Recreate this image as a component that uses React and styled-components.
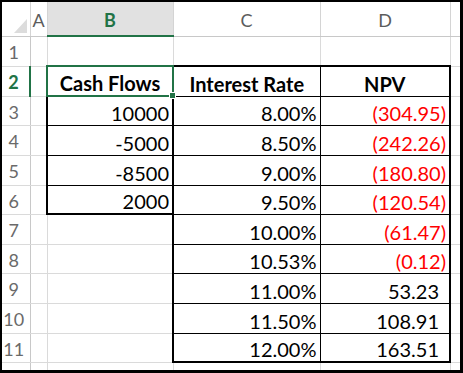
import React from "react";
import styled, { createGlobalStyle } from "styled-components";

const GREEN = "#217346";
const GRID = "1px solid #dadada";
const HEAD_LINE = "1px solid #c8c8c8";
const THIN = "1px solid #000";
const THICK = "2px solid #000";
const SEL = `2px solid ${GREEN}`;

const COLS = ["A", "B", "C", "D", "E"];
const WIDTHS = { rh: 28, A: 17, B: 126, C: 147, D: 130, E: 10 };
const HEIGHTS = [30, 30, 29, 30, 30, 29, 30, 29, 30, 30, 29];

const data = {
  2: { B: "Cash Flows", C: "Interest Rate", D: "NPV" },
  3: { B: "10000", C: "8.00%", D: "(304.95)" },
  4: { B: "-5000", C: "8.50%", D: "(242.26)" },
  5: { B: "-8500", C: "9.00%", D: "(180.80)" },
  6: { B: "2000", C: "9.50%", D: "(120.54)" },
  7: { C: "10.00%", D: "(61.47)" },
  8: { C: "10.53%", D: "(0.12)" },
  9: { C: "11.00%", D: "53.23" },
  10: { C: "11.50%", D: "108.91" },
  11: { C: "12.00%", D: "163.51" },
};

// which bordered block a cell belongs to
const region = (r, c) => {
  if (c === "B" && r >= 2 && r <= 6) return 1;
  if ((c === "C" || c === "D") && r >= 2 && r <= 11) return 2;
  return 0;
};

const edge = (a, b) => {
  if (a !== b && (a || b)) return THICK;
  if (a && a === b) return THIN;
  return GRID;
};

// border above row r
const hEdge = (r, c) => {
  if (c === "B" && (r === 2 || r === 3)) return SEL;
  if (r === 1) return c === "B" ? SEL : HEAD_LINE;
  return edge(region(r - 1, c), region(r, c));
};

// border left of column c
const vEdge = (r, c) => {
  if (r === 2 && (c === "B" || c === "C")) return SEL;
  if (c === "A") return r === 2 ? SEL : HEAD_LINE;
  const prev = COLS[COLS.indexOf(c) - 1];
  return edge(region(r, prev), region(r, c));
};

const GlobalStyle = createGlobalStyle`
  body {
    margin: 0;
    background: #fff;
  }
`;

const Frame = styled.div`
  width: 463px;
  height: 373px;
  box-sizing: border-box;
  border: 2px solid #000;
  border-right-width: 3px;
  border-bottom-width: 3px;
  overflow: hidden;
  background: #fff;
  font-family: Lato, "Liberation Sans", sans-serif;
`;

const Sheet = styled.table`
  border-collapse: collapse;
  table-layout: fixed;
  width: 458px;
`;

const Row = styled.tr`
  height: ${(p) => p.$h}px;
`;

const HeadCell = styled.th`
  box-sizing: border-box;
  height: 34px;
  padding: 2px 0 0;
  line-height: 20px;
  font-size: 18px;
  font-weight: ${(p) => (p.$active ? 700 : 400)};
  color: ${(p) => (p.$active ? GREEN : "#5c5c5c")};
  background: ${(p) => (p.$active ? "#e1e1e1" : "#fff")};
  border-left: 1px solid #d4d4d4;
  border-right: 1px solid #d4d4d4;
  border-top: none;
  border-bottom: ${(p) => p.$b};
  text-align: center;
  vertical-align: middle;
`;

const Corner = styled.th`
  box-sizing: border-box;
  height: 34px;
  padding: 0;
  border-right: 1px solid #d4d4d4;
  border-bottom: ${HEAD_LINE};
  svg {
    display: block;
    margin: 14px 0 0 12px;
  }
`;

const RowHead = styled.th`
  box-sizing: border-box;
  height: ${(p) => p.$h}px;
  padding: 2px 4px 0 0;
  line-height: 20px;
  font-size: 18px;
  font-weight: ${(p) => (p.$active ? 700 : 400)};
  color: ${(p) => (p.$active ? GREEN : "#6a6a6a")};
  background: #fff;
  border-right: ${(p) => p.$r};
  border-bottom: 1px solid #dadada;
  text-align: center;
  vertical-align: middle;
  overflow: hidden;
`;

const Cell = styled.td`
  position: relative;
  box-sizing: border-box;
  height: ${(p) => p.$h}px;
  padding: 0 ${(p) => (p.$pos ? 10 : 3)}px 1px 3px;
  line-height: 22px;
  font-size: 20px;
  font-weight: ${(p) => (p.$bold ? 700 : 400)};
  color: ${(p) => (p.$red ? "#ff0000" : "#000")};
  text-align: ${(p) => (p.$bold ? "center" : "right")};
  vertical-align: bottom;
  white-space: nowrap;
  overflow: visible;
  border-top: ${(p) => p.$t};
  border-right: ${(p) => p.$r};
  border-bottom: ${(p) => p.$b};
  border-left: ${(p) => p.$l};
`;

const FillHandle = styled.span`
  position: absolute;
  right: -4px;
  bottom: -4px;
  width: 5px;
  height: 5px;
  background: ${GREEN};
  border: 1px solid #fff;
  z-index: 2;
`;

export default function App() {
  const rows = HEIGHTS.map((h, i) => i + 1);
  return (
    <Frame>
      <GlobalStyle />
      <Sheet>
        <colgroup>
          <col style={{ width: WIDTHS.rh }} />
          {COLS.map((c) => (
            <col key={c} style={{ width: WIDTHS[c] }} />
          ))}
        </colgroup>
        <thead>
          <Row $h={34}>
            <Corner>
              <svg width="13" height="14" viewBox="0 0 13 14">
                <polygon points="13,0 13,14 0,14" fill="#dcdcdc" />
              </svg>
            </Corner>
            {COLS.map((c) => (
              <HeadCell key={c} $active={c === "B"} $b={hEdge(1, c)}>
                {c === "E" ? "" : c}
              </HeadCell>
            ))}
          </Row>
        </thead>
        <tbody>
          {rows.map((r) => {
            const h = HEIGHTS[r - 1];
            return (
              <Row key={r} $h={h}>
                <RowHead $h={h} $active={r === 2} $r={vEdge(r, "A")}>
                  {r}
                </RowHead>
                {COLS.map((c, ci) => {
                  const v = data[r] && data[r][c];
                  const next = COLS[ci + 1];
                  const isNpv = c === "D" && r > 2;
                  return (
                    <Cell
                      key={c}
                      $h={h}
                      $t={hEdge(r, c)}
                      $b={hEdge(r + 1, c)}
                      $l={vEdge(r, c)}
                      $r={next ? vEdge(r, next) : GRID}
                      $bold={r === 2}
                      $red={isNpv && v && v.startsWith("(")}
                      $pos={isNpv && v && !v.startsWith("(")}
                    >
                      {v}
                      {r === 2 && c === "B" && <FillHandle />}
                    </Cell>
                  );
                })}
              </Row>
            );
          })}
          <Row $h={10}>
            <RowHead $h={10} $r={HEAD_LINE} />
            {COLS.map((c) => (
              <Cell key={c} $h={10} $t={hEdge(12, c)} $b={GRID} $l={GRID} $r={GRID} />
            ))}
          </Row>
        </tbody>
      </Sheet>
    </Frame>
  );
}
